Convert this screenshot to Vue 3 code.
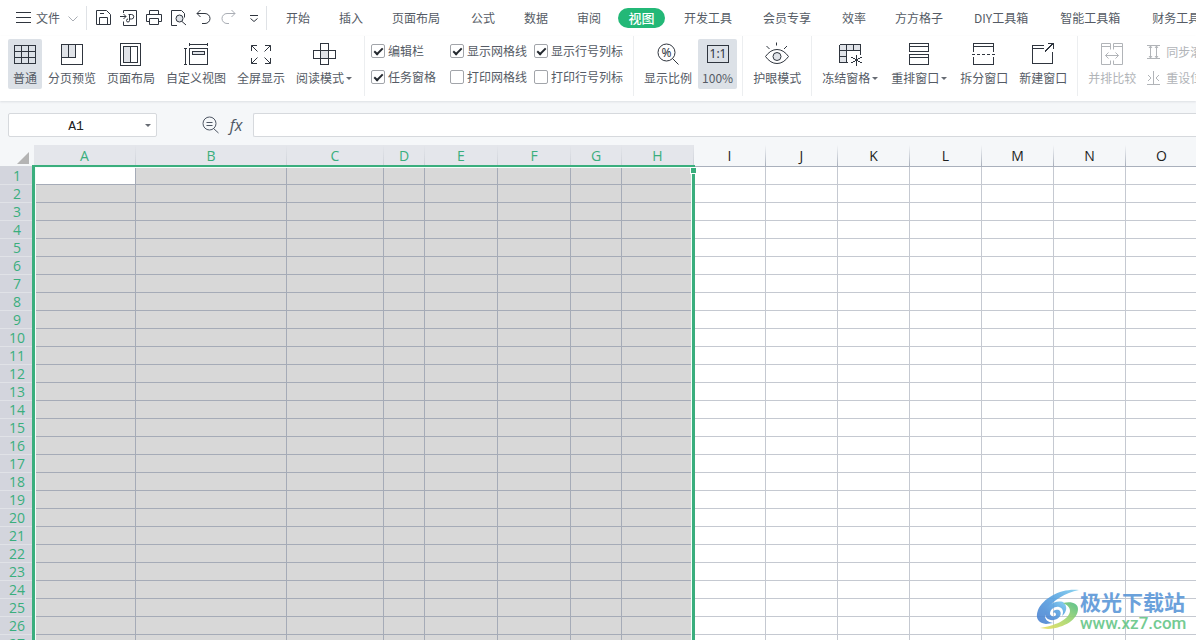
<script setup>
const icons = {
  grid: { d: 'M1.5 3.5h21v18h-21zM1.5 9.5h21M1.5 15.5h21M8.5 3.5v18M15.5 3.5v18' },
  pageBreak: { f: 'M1.5 2.5h14v13h-14z', d: 'M1.5 2.5h21v20h-21zM1.5 15.5h14v-13M8.5 2.5v13' },
  pageLayout: { f: 'M4.5 4.5h7v16h-7z', d: 'M1.5 1.5h20v22h-20zM4.5 4.5h14v16h-14zM11.5 4.5v16' },
  customView: { f: 'M8.5 9.5h12v3h-12z', d: 'M5.5 6.5h18v16h-18zM8.5 9.5h12v3h-12zM5.5 2.5h18M5.5 1v3M23.5 1v3M1.5 6.5v16M0 6.5h3M0 22.5h3' },
  fullScreen: { round: true, d: 'M2.5 9v-5.5h5.5M2.5 3.5l6 6M16 3.5h5.5v5.5M21.5 3.5l-6 6M2.5 16v5.5h5.5M2.5 21.5l6-6M16 21.5h5.5v-5.5M21.5 21.5l-6-6' },
  reading: { f: 'M7.5 8.5h8v8h-8z', d: 'M7.5 1.5h8v21h-8zM.5 8.5h22v8h-22z' },
  zoom: { round: true, d: 'M19 10.5a8.5 8.5 0 1 1-17 0a8.5 8.5 0 1 1 17 0M16.5 16.5l6 6', t: '%', tx: 10.5, ty: 15 },
  actual: { d: 'M1.5 3.5h21v17h-21z', t: '1:1', tx: 12, ty: 16 },
  eye: { round: true, f: 'M16 14.5a4 4 0 1 1-8 0a4 4 0 1 1 8 0', d: 'M.5 14.5Q5.5 7.5 12 7.5T23.5 14.5Q18.5 21.5 12 21.5T.5 14.5M16 14.5a4 4 0 1 1-8 0a4 4 0 1 1 8 0M11.5 .5v3M1.500 4l3 3M22 4l-3 3' },
  freeze: { f: 'M.5 2.5h21v6h-14v12h-7z', d: 'M.5 2.5h21v10M.5 2.5v18h8M.5 8.5h21M7.5 2.5v18M14.5 2.5v6M.5 14.5h7M17.5 12.5v11M12.500 15l10 6M22.500 15l-10 6' },
  arrange: { d: 'M1.5 1.5h19v8h-19zM1.5 4.5h19M1.5 12.5h19v10h-19zM1.5 15.5h19' },
  split: { d: 'M1.5 9.5v-8h20v8M1.5 4.5h20M1.5 15v7.5h20v-7.5M0 12.5h3M5 12.5h3M10 12.5h3M15 12.5h3M20 12.5h3' },
  newWindow: { d: 'M13 3.5h-11.5v18h20v-12M1.5 6.5h11M14 9.5l8.5-8.5M17 1.5h5.5v5.5' },
  compare: { round: true, d: 'M10.5 7.5v-6h-9v21h9v-4M13.5 7.5v-6h9v21h-9v-4M1.5 4.5h9M13.500 4.5h9M5.5 13.5h13M8.5 10.5l-3 3l3 3M15.5 10.5l3 3l-3 3' },
}

const quick = [
  { name: '保存', d: 'M1.5 1.5h10l4 4v10h-14zM4.5 15v-6.500h8v6.500M5 4.500h4' },
  { name: '输出为PDF', d: 'M3.500 4v-2.500h13v15h-13v-4M0 7.500h6M3.500 5l2.500 2.500l-2.500 2.500M8.500 5.500h3a2.200 2.200 0 0 1 0 4.500h-2M9.500 5.500v6a1.500 1.500 0 1 1-1.500-1.500' },
  { name: '打印', d: 'M4.5 5v-3.500h9v3.500M4.500 12.500h-3v-7h15v7h-3M4.500 9.500h9v6h-9z' },
  { name: '打印预览', f: 'M13 9.500a3.500 3.500 0 1 1-7 0a3.500 3.500 0 1 1 7 0', d: 'M7 16.500h-5.500v-15h10l3 3v4M13 9.500a3.500 3.500 0 1 1-7 0a3.500 3.500 0 1 1 7 0M12 12.500l4 3.500' },
  { name: '撤销', d: 'M2 4.5h8a5 5 0 0 1 0 10h-3M5.5 1l-3.5 3.500l3.500 3.500' },
  { name: '恢复', off: true, d: 'M15 4.500h-8a5 5 0 0 0 0 10h2M11.500 1l3.500 3.500l-3.500 3.500' },
  { name: '更多', d: 'M5 6.500h8M5.500 9.500l3.500 3l3.500-3' },
]

const tabs = ['开始', '插入', '页面布局', '公式', '数据', '审阅', '视图', '开发工具', '会员专享', '效率', '方方格子', 'DIY工具箱', '智能工具箱', '财务工具箱']
const tabSize = (t) => (t.length === 2 ? 'short' : t.length === 4 ? 'medium' : 'long')

const views = [
  { label: '普通', icon: 'grid', on: true },
  { label: '分页预览', icon: 'pageBreak' },
  { label: '页面布局', icon: 'pageLayout' },
  { label: '自定义视图', icon: 'customView' },
  { label: '全屏显示', icon: 'fullScreen' },
  { label: '阅读模式', icon: 'reading', menu: true },
]
const checks = [
  { label: '编辑栏', on: true },
  { label: '显示网格线', on: true },
  { label: '显示行号列标', on: true },
  { label: '任务窗格', on: true },
  { label: '打印网格线', on: false },
  { label: '打印行号列标', on: false },
]
const groups = [
  [{ label: '显示比例', icon: 'zoom' }, { label: '100%', icon: 'actual', on: true }],
  [{ label: '护眼模式', icon: 'eye' }],
  [
    { label: '冻结窗格', icon: 'freeze', menu: true },
    { label: '重排窗口', icon: 'arrange', menu: true },
    { label: '拆分窗口', icon: 'split' },
    { label: '新建窗口', icon: 'newWindow' },
  ],
  [{ label: '并排比较', icon: 'compare', off: true }],
]
const ribbon = [views, 'checks', ...groups]

const columns = 'ABCDEFGHIJKLMNO'.split('').map((name, i) => ({
  name,
  width: [102, 151, 97, 41, 73, 73, 51][i] ?? 72,
  sel: i < 8,
}))
const rows = 27
</script>

<template>
  <div class="app">
    <nav class="menubar">
      <button class="file">
        <svg width="15" height="14"><path d="M0 1.5h15M0 6.5h15M0 11.5h15" /></svg>
        <span>文件</span>
        <svg class="pale" width="10" height="14"><path d="M.5 5.5l4.500 4.500l4.500-4.500" /></svg>
      </button>
      <div class="quick">
        <button v-for="q in quick" :key="q.name" :aria-label="q.name" :disabled="q.off">
          <svg width="18" height="18" :class="{ pale: q.off }">
            <path v-if="q.f" class="fill" :d="q.f" />
            <path :d="q.d" />
          </svg>
        </button>
      </div>
      <div class="tabs">
        <button v-for="t in tabs" :key="t" class="tab" :class="[tabSize(t), { current: t === '视图' }]"><span>{{ t }}</span></button>
      </div>
    </nav>

    <div class="ribbon">
      <template v-for="(g, i) in ribbon" :key="i">
        <div v-if="g === 'checks'" class="group checks">
          <label v-for="c in checks" :key="c.label"><input type="checkbox" :checked="c.on" />{{ c.label }}</label>
        </div>
        <div v-else class="group">
          <button v-for="b in g" :key="b.label" class="tool" :class="{ on: b.on, off: b.off }" :disabled="b.off">
            <svg width="24" height="24" :class="{ crisp: !icons[b.icon].round }">
              <path v-if="icons[b.icon].f" class="fill" :d="icons[b.icon].f" />
              <path :d="icons[b.icon].d" />
              <text v-if="icons[b.icon].t" :x="icons[b.icon].tx" :y="icons[b.icon].ty">{{ icons[b.icon].t }}</text>
            </svg>
            <span class="caption">{{ b.label }}<i v-if="b.menu" class="caret"></i></span>
          </button>
          <div v-if="i === ribbon.length - 1" class="stack">
            <button disabled><svg width="14" height="14"><path d="M0 .5h13M0 13.5h13M3.5 1v12M9.5 1v12M2 3l1.500-2l1.500 2M8 3l1.500-2l1.500 2M2 11l1.500 2l1.500-2M8 11l1.500 2l1.500-2" /></svg>同步滚动</button>
            <button disabled><svg width="14" height="14"><path d="M0 13.5h13M6.5 0v13M1 4l3 3l-3 3M12 4l-3 3l3 3" /></svg>重设位置</button>
          </div>
        </div>
      </template>
    </div>

    <div class="formula">
      <div class="namebox">
        <input type="text" value="A1" aria-label="名称框" />
        <button aria-label="选择名称"><i class="caret"></i></button>
      </div>
      <button class="search" aria-label="查找">
        <svg width="18" height="18"><path d="M15 7.5a6.500 6.500 0 1 1-13 0a6.500 6.500 0 1 1 13 0M12.500 12.500l5 4.500M5.500 6.500h6M5.500 9.500h6" /></svg>
      </button>
      <button class="fx" aria-label="插入函数">fx</button>
      <input class="entry" type="text" aria-label="编辑栏" />
    </div>

    <main class="sheet">
      <table>
        <colgroup>
          <col class="numbers" />
          <col v-for="c in columns" :key="c.name" :style="{ width: c.width + 'px' }" />
        </colgroup>
        <thead>
          <tr>
            <th class="corner"><svg width="12" height="12"><path d="M12 0v12h-12z" /></svg></th>
            <th v-for="c in columns" :key="c.name" scope="col" class="letter" :class="{ sel: c.sel }">{{ c.name }}</th>
          </tr>
        </thead>
        <tbody>
          <tr v-for="r in rows" :key="r">
            <th scope="row">{{ r }}</th>
            <td v-for="c in columns" :key="c.name" :class="{ sel: c.sel, active: r === 1 && c.name === 'A' }"></td>
          </tr>
        </tbody>
      </table>
      <div class="selection"><i class="handle"></i></div>
      <div class="mark">
        <svg class="logo" width="44" height="42" viewBox="0 0 44 42">
          <defs>
            <linearGradient id="blue" x1="0" y1="1" x2="1" y2="0"><stop offset="0" stop-color="#4a7fd0" /><stop offset=".6" stop-color="#5aa5e2" /><stop offset="1" stop-color="#7fd0f0" /></linearGradient>
            <linearGradient id="green" x1="0" y1="1" x2="1" y2="0"><stop offset="0" stop-color="#f0df5c" /><stop offset=".5" stop-color="#a8d76c" /><stop offset="1" stop-color="#4bbb83" /></linearGradient>
          </defs>
          <path class="sky" d="M43 1C26-1 8 8 2 21c-3 8 0 13 8 14l7-1C9 33 7 27 11 21 17 11 29 4 43 1z" />
          <path class="sky" d="M27 13c-9-2-17 4-18 10-1 7 6 10 12 7 4-2 5-7 2-9-3-1-6 0-6 3 2-1 3 0 3 2-1 2-5 2-6-1 0-5 5-8 9-7 4 1 5 5 3 9 5-4 6-10 1-14z" />
          <path class="grass" d="M27 14c8-2 15 0 15 6 0 10-13 19-30 20l-8-1c14-2 29-8 30-17 0-4-3-6-7-8z" />
        </svg>
        <div><b>极光下载站</b><span>www.xz7.com</span></div>
      </div>
    </main>
  </div>
</template>

<style>
body { margin: 0; overflow: hidden; }
</style>

<style scoped>
.app { display: flex; flex-direction: column; height: 100vh; overflow: hidden; background: #f5f7f9; color: #555b65; font: 12px/18px "Noto Sans CJK SC", sans-serif; }
button, input { font: inherit; color: inherit; border: 0; padding: 0; margin: 0; background: none; box-sizing: border-box; }
button { white-space: nowrap; }
svg { display: block; flex: none; overflow: visible; }
svg path { fill: none; stroke: #2f353e; }
svg.pale path { stroke: #a9adb4; }
svg .fill { fill: #e0e3e8; stroke: none; }
.menubar { display: flex; flex: none; align-items: center; height: 36px; background: #fff; }
.file { display: flex; align-items: center; gap: 5px; padding-left: 16px; flex: none; }
.file .pale { margin-left: 3px; }
.quick { display: flex; flex: none; margin-left: 8px; padding: 0 0 0 4px; border-left: 1px solid #dfe2e6; border-right: 1px solid #dfe2e6; height: 24px; align-items: center; }
.quick button { width: 25px; height: 24px; display: flex; align-items: center; justify-content: center; }
.tabs { display: flex; flex: none; margin-left: 4px; align-items: center; }
.tab { flex: none; text-align: left; padding-left: 15px; height: 20px; }
.short { width: 53px; }
.medium { width: 79px; }
.long { padding-right: 17px; }
.current { padding-left: 3px; width: 54px; }
.current span { display: block; width: 47px; height: 20px; line-height: 20px; border-radius: 10px; background: #23b877; color: #fff; font-size: 13px; font-weight: 500; text-align: center; }

.ribbon { display: flex; flex: none; height: 65px; padding: 0 0 0 8px; background: #fff; box-shadow: 0 1px 2px #dcdfe3; z-index: 1; }
.group { display: flex; flex: none; gap: 1px; padding: 3px 5px 0; height: 60px; box-sizing: border-box; align-items: flex-start; border-right: 1px solid #eceef0; }
.group:first-child { padding-left: 0; }
.group:last-child { border: 0; }
.tool { height: 50px; padding: 3px 5px 0; display: flex; flex-direction: column; align-items: center; gap: 3px; border-radius: 2px; }
.tool.on { background: #dce1e7; padding: 3px 4px 0; min-width: 34px; }
.tool text { font: 12px "Noto Sans", sans-serif; text-anchor: middle; fill: #2f353e; }
.crisp { shape-rendering: crispEdges; }
.off { color: #b1b4b8; }
.off path, .stack path { stroke: #b1b4b8; }
.caption { display: flex; align-items: center; }
.caret { border: 3px solid transparent; border-top-color: #666b73; border-bottom: 0; margin: 0 2px; flex: none; }
.checks { display: grid; grid-template-columns: 79px 84px 89px; grid-auto-rows: 26px; gap: 0; padding: 2px 10px 0 6px; align-items: center; }
.checks label { display: flex; align-items: center; gap: 3px; white-space: nowrap; }
.checks input { appearance: none; width: 14px; height: 14px; border: 1px solid #a2a5aa; border-radius: 2px; background: #fff; display: grid; place-items: center; }
.checks input:checked::after { content: ""; width: 7px; height: 3px; border: solid #24292f; border-width: 0 0 2px 2px; transform: translateY(-1px) rotate(-45deg); }
.stack { padding-left: 5px; }
.stack button { display: flex; gap: 5px; align-items: center; height: 26px; color: #b1b4b8; }

.formula { display: flex; flex: none; align-items: center; height: 24px; padding: 12px 0 8px 8px; }
.namebox { display: flex; width: 149px; height: 24px; border: 1px solid #d6d9dd; border-radius: 2px; background: #fff; box-sizing: border-box; }
.namebox input { flex: 1; min-width: 0; text-align: center; color: #222; padding-top: 2px; font: 13px "Liberation Mono", monospace; }
.namebox button { width: 13px; }
.namebox .caret { display: block; width: 0; }
.search { margin-left: 44px; }
.search path { stroke: #4f5765; }
.fx { width: 34px; font: italic 16px/24px "Open Sans", sans-serif; color: #4f5765; }
.entry { flex: 1; min-width: 0; height: 24px; background: #fff; border: 1px solid #d6d9dd; border-right: 0; border-radius: 2px 0 0 2px; }

.sheet { position: relative; flex: 1; min-height: 0; overflow: hidden; }
table { table-layout: fixed; width: 0; border-collapse: separate; border-spacing: 0; }
.numbers { width: 34px; }
th, td { padding: 0; box-sizing: border-box; height: 18px; }
th { font: 14px/17px "Open Sans", "Noto Sans", sans-serif; text-align: center; color: #1e1e1e; }
thead th { height: 22px; border-bottom: 1px solid #a9b0bc; }
.letter { background: linear-gradient(#f5f7f9, #a9b0bc) right / 1px 100% no-repeat; padding-right: 1px; }
.letter.sel { background: linear-gradient(#e4e6eb, #cdd1d8) right / 1px 100% no-repeat #e4e6eb; color: #3aae7d; }
.corner { border-bottom-color: #d3d6dd; }
.corner svg { margin: 4px 5px 0 auto; }
.corner path { fill: #b4b4b4; stroke: none; }
tbody th { background: #d3d5dd; color: #3aae7d; border-bottom: 1px solid #e0e2e7; }
td { background: #fff; border-right: 1px solid #c5c9d1; border-bottom: 1px solid #c5c9d1; }
td.sel { background: #d8d8d8; border-color: #a5abb7; }
td.active { background: #fff; }
.selection { position: absolute; left: 32px; top: 20px; width: 663px; bottom: -4px; box-sizing: border-box; border: 3px solid #3aae7d; border-top-width: 2px; box-shadow: inset 0 0 0 1px #f4fffa; }
.handle { position: absolute; right: -5px; top: 0; width: 5px; height: 5px; background: #3aae7d; border: 1px solid #fff; }
.mark { position: absolute; right: 11px; bottom: 7px; display: flex; opacity: .9; }
.mark div { display: flex; flex-direction: column; width: 105px; }
.mark b { font-size: 21px; line-height: 24px; color: #5b97d8; }
.mark span { font: 500 17px/20px Roboto, sans-serif; color: #65c687; }
.logo path { stroke: none; }
.logo .sky { fill: url(#blue); }
.logo .grass { fill: url(#green); }
</style>
